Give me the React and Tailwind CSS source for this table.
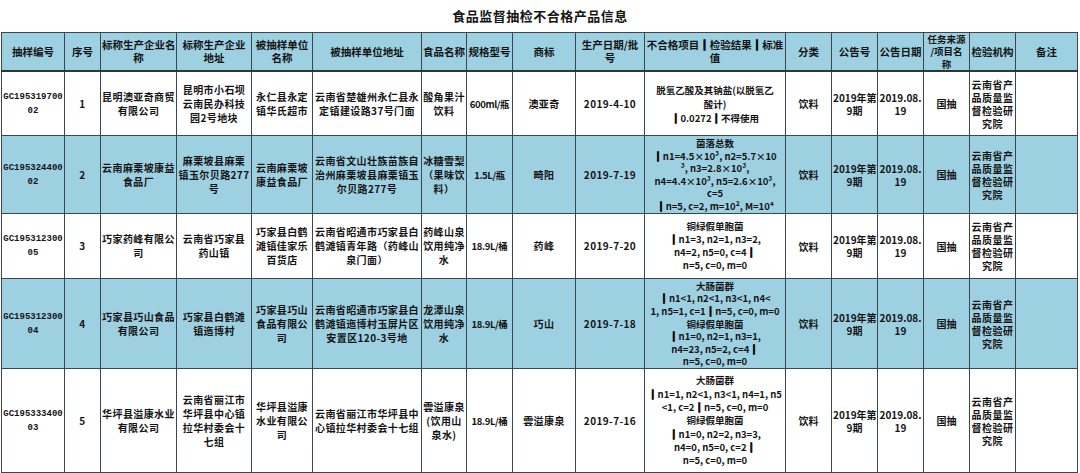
const cols = [63, 36, 76, 75, 61, 109, 45, 46, 63, 69, 141, 46, 46, 46, 46, 46, 62];

const headers = [
  ['抽样编号'],
  ['序号'],
  ['标称生产企业名', '称'],
  ['标称生产企业', '地址'],
  ['被抽样单位', '名称'],
  ['被抽样单位地址'],
  ['食品名称'],
  ['规格型号'],
  ['商标'],
  ['生产日期/批', '号'],
  ['不合格项目┃检验结果┃标准', '值'],
  ['分类'],
  ['公告号'],
  ['公告日期'],
  ['任务来源', '/项目名', '称'],
  ['检验机构'],
  ['备注'],
];

const institute = ['云南省产', '品质量监', '督检验研', '究院'];

const rows = [
  {
    h: 'h-[65px]',
    blue: false,
    code: ['GC195319700', '02'],
    cells: [
      ['1'],
      ['昆明澳亚奇商贸', '有限公司'],
      ['昆明市小石坝', '云南民办科技', '园2号地块'],
      ['永仁县永定', '镇华氏超市'],
      ['云南省楚雄州永仁县永', '定镇建设路37号门面'],
      ['酸角果汁', '饮料'],
      ['600ml/瓶'],
      ['澳亚奇'],
      ['2019-4-10'],
    ],
    test: ['脱氢乙酸及其钠盐(以脱氢乙', '酸计)', '┃0.0272┃不得使用'],
    testLh: 'leading-[14px]',
  },
  {
    h: 'h-[78px]',
    blue: true,
    code: ['GC195324400', '02'],
    cells: [
      ['2'],
      ['云南麻栗坡康益', '食品厂'],
      ['麻栗坡县麻栗', '镇玉尔贝路277', '号'],
      ['云南麻栗坡', '康益食品厂'],
      ['云南省文山壮族苗族自', '治州麻栗坡县麻栗镇玉', '尔贝路277号'],
      ['冰糖雪梨', '（果味饮', '料）'],
      ['1.5L/瓶'],
      ['畸阳'],
      ['2019-7-19'],
    ],
    test: [
      '菌落总数',
      '┃n1=4.5×10³, n2=5.7×10',
      '³, n3=2.8×10³,',
      'n4=4.4×10³, n5=2.6×10³,',
      'c=5',
      '┃n=5, c=2, m=10², M=10⁴',
    ],
    testLh: 'leading-[12.5px]',
  },
  {
    h: 'h-[65px]',
    blue: false,
    code: ['GC195312300', '05'],
    cells: [
      ['3'],
      ['巧家药峰有限公', '司'],
      ['云南省巧家县', '药山镇'],
      ['巧家县白鹤', '滩镇佳家乐', '百货店'],
      ['云南省昭通市巧家县白', '鹤滩镇青年路（药峰山', '泉门面）'],
      ['药峰山泉', '饮用纯净', '水'],
      ['18.9L/桶'],
      ['药峰'],
      ['2019-7-20'],
    ],
    test: ['铜绿假单胞菌', '┃n1=3, n2=1, n3=2,', 'n4=2, n5=0, c=4┃', 'n=5, c=0, m=0'],
    testLh: 'leading-[13px]',
  },
  {
    h: 'h-[90px]',
    blue: true,
    code: ['GC195312300', '04'],
    cells: [
      ['4'],
      ['巧家县巧山食品', '有限公司'],
      ['巧家县白鹤滩', '镇迤博村'],
      ['巧家县巧山', '食品有限公', '司'],
      ['云南省昭通市巧家县白', '鹤滩镇迤博村玉屏片区', '安置区120-3号地'],
      ['龙潭山泉', '饮用纯净', '水'],
      ['18.9L/桶'],
      ['巧山'],
      ['2019-7-18'],
    ],
    test: [
      '大肠菌群',
      '┃n1<1, n2<1, n3<1, n4<',
      '1, n5=1, c=1┃n=5, c=0, m=0',
      '铜绿假单胞菌',
      '┃n1=0, n2=1, n3=1,',
      'n4=23, n5=2, c=4┃',
      'n=5, c=0, m=0',
    ],
    testLh: 'leading-[12.6px]',
  },
  {
    h: 'h-[104px]',
    blue: false,
    code: ['GC195333400', '03'],
    cells: [
      ['5'],
      ['华坪县溢康水业', '有限公司'],
      ['云南省丽江市', '华坪县中心镇', '拉华村委会十', '七组'],
      ['华坪县溢康', '水业有限公', '司'],
      ['云南省丽江市华坪县中', '心镇拉华村委会十七组'],
      ['雲溢康泉', '(饮用山', '泉水)'],
      ['18.9L/桶'],
      ['雲溢康泉'],
      ['2019-7-16'],
    ],
    test: [
      '大肠菌群',
      '┃n1=1, n2<1, n3<1, n4=1, n5',
      '<1, c=2┃n=5, c=0, m=0',
      '铜绿假单胞菌',
      '┃n1=0, n2=2, n3=3,',
      'n4=0, n5=0, c=2┃',
      'n=5, c=0, m=0',
    ],
    testLh: 'leading-[13.3px]',
  },
];

const cellBase = 'border border-[#3b474d] text-center align-middle px-[1px] overflow-hidden';

// thick separator bars as in the source sheet
function Bars({ text }) {
  const parts = text.split('┃');
  return parts.map((p, i) => (
    <span key={i}>
      {i > 0 && <span className="font-black text-black [-webkit-text-stroke:0.8px_black]">┃</span>}
      {p}
    </span>
  ));
}

function Lines({ lines, className = '' }) {
  return (
    <div className={className}>
      {lines.map((l, i) => (
        <div key={i} className="whitespace-nowrap">
          <Bars text={l} />
        </div>
      ))}
    </div>
  );
}

export default function App() {
  return (
    <div
      className="w-[1080px] h-[473px] bg-white text-[#141414] overflow-hidden"
      style={{ fontFamily: '"Noto Sans CJK SC", "Noto Sans", sans-serif' }}
    >
      <div className="h-[32px] flex items-center justify-center text-[13px] font-bold tracking-[0.5px]">
        食品监督抽检不合格产品信息
      </div>
      <table className="ml-[1px] w-[1076px] table-fixed border-collapse">
        <colgroup>
          {cols.map((w, i) => (
            <col key={i} style={{ width: w }} />
          ))}
        </colgroup>
        <thead>
          <tr className="h-[38px] bg-[#9dd0e1]">
            {headers.map((h, i) => (
              <th
                key={i}
                className={`${cellBase} border-b-2 border-b-[#2b353a] font-bold ${h.length > 2 ? 'text-[9.5px] leading-[12.3px]' : 'text-[10.5px] leading-[13px]'}`}
              >
                <Lines lines={h} />
              </th>
            ))}
          </tr>
        </thead>
        <tbody>
          {rows.map((r, ri) => (
            <tr key={ri} className={`${r.h} ${r.blue ? 'bg-[#9dd0e1]' : 'bg-white'}`}>
              <td className={`${cellBase} text-[9px] leading-[14px] font-bold`} style={{ fontFamily: '"Liberation Mono", monospace' }}>
                <Lines lines={r.code} />
              </td>
              {r.cells.map((c, ci) => (
                <td
                  key={ci}
                  className={`${cellBase} leading-[14px] font-semibold ${ci === 6 ? 'text-[9.5px] tracking-[-0.4px]' : 'text-[10px] tracking-[0.4px]'}`}
                >
                  <Lines lines={c} />
                </td>
              ))}
              <td className={`${cellBase} text-[9.5px] ${r.testLh} font-semibold`}>
                <Lines lines={r.test} />
              </td>
              <td className={`${cellBase} text-[10px] font-semibold`}>饮料</td>
              <td className={`${cellBase} text-[10px] leading-[13px] font-semibold`}>
                <Lines lines={['2019年第', '9期']} />
              </td>
              <td className={`${cellBase} text-[10px] leading-[13px] font-semibold`}>
                <Lines lines={['2019.08.', '19']} />
              </td>
              <td className={`${cellBase} text-[10px] font-semibold`}>国抽</td>
              <td className={`${cellBase} text-[10px] leading-[13px] font-semibold tracking-[0.5px]`}>
                <Lines lines={institute} />
              </td>
              <td className={cellBase}></td>
            </tr>
          ))}
        </tbody>
      </table>
    </div>
  );
}
